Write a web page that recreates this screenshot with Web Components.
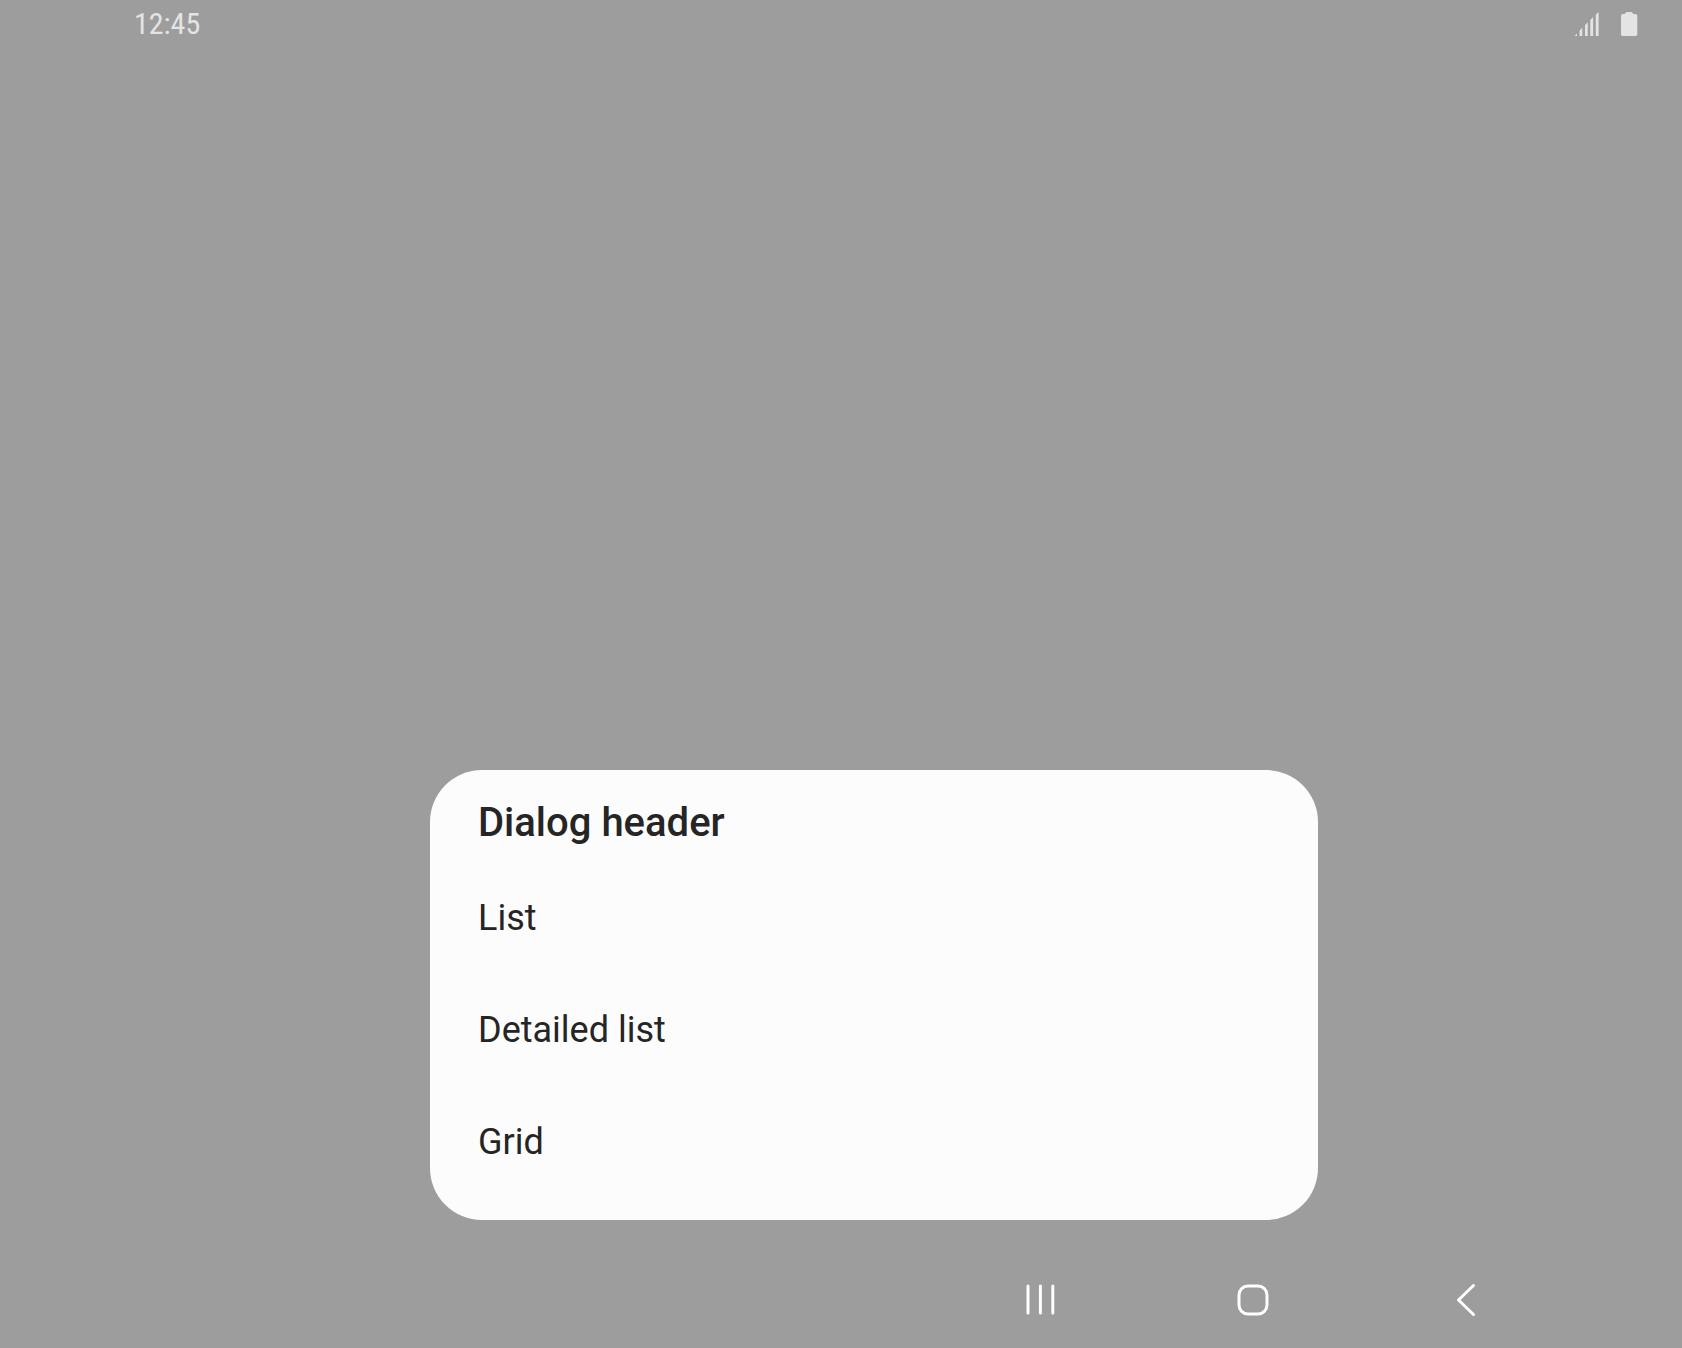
<!DOCTYPE html>
<html lang="en">
<head>
<meta charset="utf-8">
<meta name="viewport" content="width=device-width, initial-scale=1">
<title>Dialog</title>
<style>
  html, body { height: 100%; margin: 0; }
  body { background: #9d9d9d; font-family: Roboto, "Liberation Sans", sans-serif; color: #252525; }
</style>
</head>
<body>
<device-screen>
  <status-bar slot="status">12:45</status-bar>
  <list-dialog heading="Dialog header">
    <dialog-option>List</dialog-option>
    <dialog-option>Detailed list</dialog-option>
    <dialog-option>Grid</dialog-option>
  </list-dialog>
  <nav-bar slot="nav"></nav-bar>
</device-screen>
<script>
  const define = (name, html, setup) => customElements.define(name, class extends HTMLElement {
    constructor() {
      super();
      this.attachShadow({ mode: "open" }).innerHTML = html;
      if (setup) setup(this);
    }
  });

  define("device-screen", `
    <style>
      :host { display: flex; flex-direction: column; min-height: 100vh; background: #9d9d9d; }
      main { flex: 1; display: flex; flex-direction: column; justify-content: flex-end;
             padding: 0 364px 32px 430px; }
    </style>
    <slot name="status"></slot>
    <main><slot></slot></main>
    <slot name="nav"></slot>`);

  define("status-bar", `
    <style>
      :host { display: flex; align-items: center; justify-content: space-between; height: 48px;
              box-sizing: border-box; padding: 0 44px 0 134px; color: #e4e4e4;
              font-family: "Roboto Condensed", Roboto, sans-serif; font-size: 30px; line-height: 36px; }
      .icons { display: flex; gap: 20px; }
      svg { display: block; fill: currentColor; }
    </style>
    <time><slot></slot></time>
    <div class="icons">
      <svg width="26" height="24" viewBox="0 0 26 24" role="img" aria-label="Signal">
        <path d="M0.500 24 L3 21.800 V24Z M5.600 24 V18.600 L8.300 15.800 V24Z M11 24 V13.200 L13.700 10.300 V24Z M16.300 24 V8 L19.100 5 V24Z M21.800 24 V2.800 L24.600 0 V24Z"/>
      </svg>
      <svg width="18" height="24" viewBox="0 0 18 24" role="img" aria-label="Battery">
        <path d="M4.700 2 L5.500 0.700 Q6 0 7 0 H11 Q12 0 12.500 0.700 L13.300 2 H15.300 Q17.300 2 17.300 4 V22.300 Q17.300 24 15.600 24 H2.700 Q1 24 1 22.300 V4 Q1 2 3 2Z"/>
      </svg>
    </div>`);

  define("list-dialog", `
    <style>
      :host { display: block; }
      section { background: #fcfcfc; border-radius: 52px; padding: 29px 0 22px; overflow: hidden; }
      h1 { margin: 0; padding: 0 48px 15px; font-size: 40px; line-height: 48px; font-weight: 500; }
    </style>
    <section role="dialog" aria-labelledby="title">
      <h1 id="title"></h1>
      <slot></slot>
    </section>`,
    el => { el.shadowRoot.getElementById("title").textContent = el.getAttribute("heading"); });

  define("dialog-option", `
    <style>
      :host { display: block; }
      button { display: block; width: 100%; height: 112px; padding: 0 48px; border: 0; background: none;
               font: inherit; font-size: 36px; line-height: 44px; color: inherit; text-align: left; cursor: pointer; }
    </style>
    <button type="button"><slot></slot></button>`);

  define("nav-bar", `
    <style>
      :host { display: block; }
      nav { display: flex; justify-content: flex-end; height: 96px; padding-right: 110px; }
      button { display: flex; align-items: center; justify-content: center; width: 213px;
               padding: 0; border: 0; background: none; color: #fff; cursor: pointer; }
      svg { display: block; fill: none; stroke: currentColor; stroke-width: 3; stroke-linecap: round; stroke-linejoin: round; }
    </style>
    <nav aria-label="System navigation">
      <button type="button" aria-label="Recent apps">
        <svg width="34" height="34"><path d="M5 3V30M17.400 3V30M29.800 3V30"/></svg>
      </button>
      <button type="button" aria-label="Home">
        <svg width="34" height="34"><rect x="3" y="3" width="28" height="28" rx="9"/></svg>
      </button>
      <button type="button" aria-label="Back">
        <svg width="34" height="34"><path d="M24.500 2.500L9.500 17L24.500 31.500"/></svg>
      </button>
    </nav>`);
</script>
</body>
</html>
